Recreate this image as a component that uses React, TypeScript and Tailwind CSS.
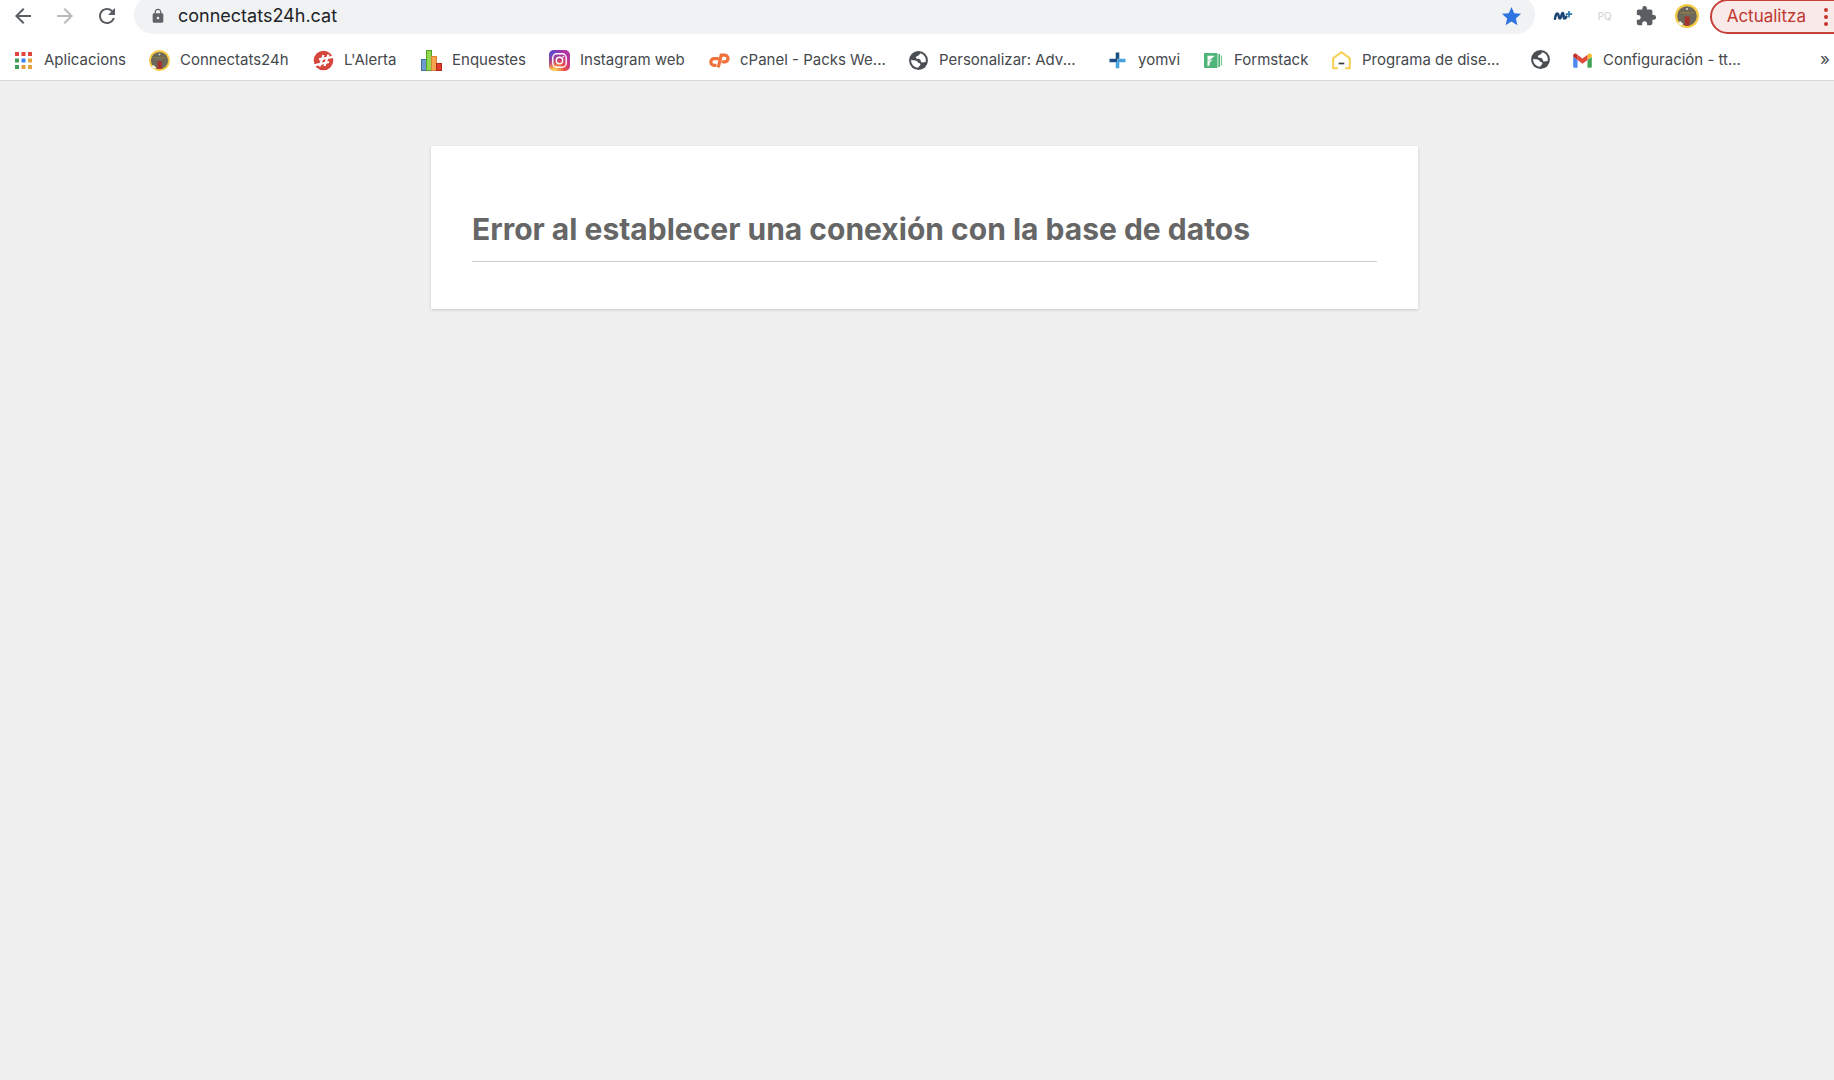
import type { ReactNode } from "react";
import { MdArrowBack, MdArrowForward, MdExtension, MdLock, MdRefresh, MdStar } from "react-icons/md";

function AppsIcon() {
  const colors = ["#e0443a", "#e0443a", "#e0443a", "#3f9b58", "#3b82f0", "#e3a33a", "#3f9b58", "#e3a33a", "#e3a33a"];
  return (
    <svg viewBox="0 0 21 21" className="size-[21px]" aria-hidden="true">
      {colors.map((c, i) => (
        <rect key={i} x={2 + (i % 3) * 6.5} y={2 + Math.floor(i / 3) * 6.5} width="4" height="4" fill={c} />
      ))}
    </svg>
  );
}

function BadgeIcon({ className }: { className: string }) {
  return (
    <svg viewBox="0 0 24 24" className={className} aria-hidden="true">
      <circle cx="12" cy="12" r="12" fill="#f4cb45" />
      <circle cx="12" cy="12" r="9.8" fill="#6b675b" />
      <path d="M5 8.800h14" stroke="#8f7d45" strokeWidth="1.400" />
      <path d="M8 11h8" stroke="#7d7564" strokeWidth="1" />
      <circle cx="12" cy="5" r="1" fill="#dcdcdc" />
      <rect x="9.800" y="12.500" width="4.800" height="9.200" fill="#a6322b" />
      <path d="M3.200 18.200l2.400-1 1.200 1.600 1.400.6-.6 1.600-2 .4-2.100-1.400z" fill="#f4f0e6" />
    </svg>
  );
}

function AlertaIcon() {
  return (
    <svg viewBox="0 0 21 21" className="size-[21px]" aria-hidden="true">
      <circle cx="10.5" cy="10.5" r="9.8" fill="#d5463c" />
      <g stroke="#fff" fill="none">
        <path d="M10.500 5 6.500 16.500M15.500 4.500 11.500 16" strokeWidth="2.200" />
        <path d="M6 9.400 20 6.800M1 15.400 16 12" strokeWidth="2.200" />
      </g>
    </svg>
  );
}

function ChartIcon() {
  return (
    <svg viewBox="0 0 21 21" className="size-[21px]" aria-hidden="true">
      <rect x="0.5" y="9.5" width="5" height="11" fill="#6f9bd0" stroke="#41709f" />
      <rect x="5.5" y="0.5" width="5" height="20" fill="#93d94e" stroke="#55a02c" />
      <rect x="10.5" y="6.5" width="5" height="14" fill="#f7a350" stroke="#d9822f" />
      <rect x="15.5" y="13.5" width="5" height="7" fill="#e23b2a" stroke="#b32a1e" />
    </svg>
  );
}

function InstagramIcon() {
  return (
    <svg viewBox="0 0 21 21" className="size-[21px]" aria-hidden="true">
      <defs>
        <radialGradient id="ig-warm" cx="0.25" cy="1.05" r="1">
          <stop offset="0" stopColor="#fedb6a" />
          <stop offset="0.15" stopColor="#fdc552" />
          <stop offset="0.5" stopColor="#ee4a45" />
          <stop offset="0.95" stopColor="#b3349f" />
        </radialGradient>
        <radialGradient id="ig-cool" cx="-0.1" cy="0" r="1">
          <stop offset="0.1" stopColor="#4158d8" />
          <stop offset="0.9" stopColor="#6b2fd6" stopOpacity="0" />
        </radialGradient>
      </defs>
      <rect width="21" height="21" rx="5" fill="url(#ig-warm)" />
      <rect width="21" height="21" rx="5" fill="url(#ig-cool)" />
      <g fill="none" stroke="#fff" strokeWidth="1.400">
        <rect x="3.800" y="3.800" width="13.400" height="13.400" rx="4" />
        <circle cx="10.5" cy="10.5" r="3.2" />
      </g>
      <circle cx="14.4" cy="6.6" r="0.9" fill="#fff" />
    </svg>
  );
}

function CPanelIcon() {
  return (
    <svg viewBox="0 0 21 21" className="size-[21px]" aria-hidden="true">
      <g fill="none" stroke="#f0713a" strokeWidth="3.200" strokeLinecap="round">
        <path d="M8.600 8.600H5.200a3.400 3.400 0 0 0 0 6.800h1" />
        <path d="M9.600 16.200 12.200 5.200h3.200a3.200 3.200 0 0 1 .6 6.600h-2" />
      </g>
    </svg>
  );
}

function GlobeIcon() {
  return (
    <svg viewBox="0 0 21 21" className="size-[21px]" aria-hidden="true">
      <circle cx="10.5" cy="10.5" r="9.400" fill="#4a4d51" />
      <path d="M12 3.200c-.3 1.500-1.300 2.300-2.600 2.700-1.500.5-1.900 1.500-1.200 2.400.9 1.100 3 .3 4 1.400.9 1 .2 2.300 1.500 2.700 1.400.4 2.700-.7 4-.5.900-4.300-1.800-8-5.700-8.700z" fill="#fff" />
      <path d="M3.200 9.800c1.700 1 3.600.3 5 .9 1.500.7 1.500 2 2.800 2.400 1.200.3 1.800 1 1.200 2.100-.5.900-1.700 1.100-1.900 2.500C5.900 17.600 2.700 14 3.200 9.800z" fill="#fff" />
    </svg>
  );
}

function YomviIcon() {
  return (
    <svg viewBox="0 0 21 21" className="size-[21px]" aria-hidden="true">
      <path d="M8.700 2.500h3.600v6.200H8.700zM2.500 8.700h8v3.600h-8z" fill="#1d4f80" />
      <path d="M10.500 8.700h8v3.600h-8zM8.700 12.300h3.600v6H8.700z" fill="#46a3dd" />
    </svg>
  );
}

function FormstackIcon() {
  return (
    <svg viewBox="0 0 21 21" className="size-[21px]" aria-hidden="true">
      <rect x="1" y="3" width="13.500" height="15" rx="0.800" fill="#4fb477" />
      <rect x="15.300" y="4" width="1.700" height="13" fill="#4fb477" />
      <rect x="17.800" y="5.500" width="1.300" height="10" fill="#7cc89a" />
      <path d="M4.500 5.800h7.300L7 9.800l-2.500.7zM4.500 11l5.300-1.400L6.800 12.400l-.3 3.200-2 .6z" fill="#fff" />
    </svg>
  );
}

function HouseIcon() {
  return (
    <svg viewBox="0 0 21 21" className="size-[21px]" aria-hidden="true">
      <path d="M7 18.200H2.200V8.200l8.300-6 8.300 6v10H14" fill="none" stroke="#f6cf4f" strokeWidth="2" />
      <path d="M7.700 13.500h5.600" stroke="#3b3b3b" strokeWidth="1.700" />
    </svg>
  );
}

function GmailIcon() {
  return (
    <svg viewBox="0 0 21 21" className="size-[21px]" aria-hidden="true">
      <path d="M1.200 7v9.500c0 .7.600 1.300 1.300 1.300h3V10z" fill="#4c86ee" />
      <path d="M15.500 17.800h3c.7 0 1.300-.6 1.300-1.300V7l-4.300 3z" fill="#42a356" />
      <path d="M15.500 4.800V10l4.300-3.200V5.500c0-1.700-1.900-2.600-3.200-1.600z" fill="#f3b928" />
      <path d="M5.500 10V4.700l5 3.800 5-3.800V10l-5 3.800z" fill="#e04b3e" />
      <path d="M1.200 5.500v1.300L5.500 10V4.700l-1.100-.8c-1.300-1-3.200-.1-3.200 1.600z" fill="#bd3229" />
    </svg>
  );
}

function MovistarIcon() {
  return (
    <svg viewBox="0 0 20 14" className="h-[14px] w-5" aria-hidden="true">
      <path d="M2 9.800C2.400 6 3.600 4 4.800 4.800c1.200.8.8 4.600 2.200 4.600S8.300 4 9.700 4s.4 5.600 1.800 5.600c1 0 1.600-1 1.900-2" fill="none" stroke="#1c4672" strokeWidth="2.500" strokeLinecap="round" />
      <path d="M16 2v6.400M12.800 5.200h6.400" stroke="#2f78b0" strokeWidth="1.700" />
    </svg>
  );
}

type Bookmark = { label?: string; name?: string; icon: ReactNode; width?: string };

const bookmarks: Bookmark[] = [
  { label: "Aplicacions", icon: <AppsIcon />, width: "min-w-[84px]" },
  { label: "Connectats24h", icon: <BadgeIcon className="size-[21px]" />, width: "min-w-28" },
  { label: "L'Alerta", icon: <AlertaIcon />, width: "min-w-14" },
  { label: "Enquestes", icon: <ChartIcon />, width: "min-w-[76px]" },
  { label: "Instagram web", icon: <InstagramIcon />, width: "min-w-[108px]" },
  { label: "cPanel - Packs We...", icon: <CPanelIcon />, width: "min-w-[147px]" },
  { label: "Personalizar: Adv...", icon: <GlobeIcon />, width: "min-w-[147px]" },
  { label: "yomvi", icon: <YomviIcon />, width: "min-w-11" },
  { label: "Formstack", icon: <FormstackIcon />, width: "min-w-[76px]" },
  { label: "Programa de dise...", icon: <HouseIcon />, width: "min-w-[147px]" },
  { name: "Web", icon: <GlobeIcon /> },
  { label: "Configuración - tt...", icon: <GmailIcon />, width: "min-w-[147px]" },
];

function Toolbar() {
  return (
    <div className="-mt-[5px] flex h-[39px] items-stretch">
      <div className="flex w-[134px] shrink-0 items-center gap-[18px] pl-[11px] pt-[3px] text-[#5a5d61]">
        <button type="button" aria-label="Enrere"><MdArrowBack className="size-6" /></button>
        <button type="button" aria-label="Endavant" className="text-[#b9bbbd]"><MdArrowForward className="size-6" /></button>
        <button type="button" aria-label="Actualitza la pàgina"><MdRefresh className="size-6" /></button>
      </div>
      <div className="flex min-w-0 flex-1 items-center rounded-full bg-[#f0f2f4] pl-4 pr-3 pt-[3px]">
        <MdLock className="size-4 shrink-0 text-[#5f6368]" />
        <input
          aria-label="Adreça"
          defaultValue="connectats24h.cat"
          className="ml-3 min-w-0 flex-1 bg-transparent text-[18px] leading-6 text-[#222427] outline-none"
        />
        <button type="button" aria-label="Preferit"><MdStar className="size-[23px] text-[#2f74e0]" /></button>
      </div>
      <div className="flex shrink-0 items-center pl-4 pt-[3px]">
        <button type="button" aria-label="Movistar+" className="flex w-6 justify-center"><MovistarIcon /></button>
        <button type="button" className="ml-[18px] w-6 text-center text-[10px] text-[#cfcfcf]">PQ</button>
        <button type="button" aria-label="Extensions" className="ml-[18px]"><MdExtension className="size-[22px] text-[#5a5d61]" /></button>
        <button type="button" aria-label="Perfil" className="ml-[18px]"><BadgeIcon className="size-6" /></button>
      </div>
      <button
        type="button"
        className="-mr-[17px] ml-[11px] mt-1 flex shrink-0 items-center gap-[18px] rounded-full border-2 border-[#c5413a] bg-[#f9e9e8] pl-[15px] pr-[21px] text-[17px] text-[#bf3730]"
      >
        Actualitza
        <svg viewBox="0 0 4 18" className="h-[18px] w-1" fill="#c5372f" aria-hidden="true">
          <circle cx="2" cy="2" r="2" /><circle cx="2" cy="9" r="2" /><circle cx="2" cy="16" r="2" />
        </svg>
      </button>
    </div>
  );
}

function BookmarksBar() {
  return (
    <nav aria-label="Adreces d'interès" className="flex h-[46px] items-center pl-[13px] pr-1 pt-[6px]">
      <ul className="flex min-w-0 flex-1 gap-[21px]">
        {bookmarks.map((b, i) => (
          <li key={i} className="shrink-0">
            <a href="#" aria-label={b.name} className="flex items-center gap-[10px]">
              {b.icon}
              {b.label && <span className={`whitespace-nowrap ${b.width ?? ""}`}>{b.label}</span>}
            </a>
          </li>
        ))}
      </ul>
      <button type="button" aria-label="Més adreces" className="text-[17px]">»</button>
    </nav>
  );
}

export default function App() {
  return (
    <div className="min-h-screen overflow-hidden bg-[#f0f0f0] font-['Inter','Liberation_Sans',sans-serif]">
      <header className="border-b border-[#d9dadd] bg-white text-[15px] text-[#45484c]">
        <Toolbar />
        <BookmarksBar />
      </header>
      <main className="pl-[15px]">
        <section className="mx-auto mt-[65px] max-w-[987px] bg-white px-[41px] pb-[47px] pt-[62px] shadow-[0_1px_3px_rgba(0,0,0,0.16)]">
          <h1 className="border-b border-[#d0d0d0] pb-[10px] text-[30px] font-bold leading-[43px] text-[#666]">
            Error al establecer una conexión con la base de datos
          </h1>
        </section>
      </main>
    </div>
  );
}
